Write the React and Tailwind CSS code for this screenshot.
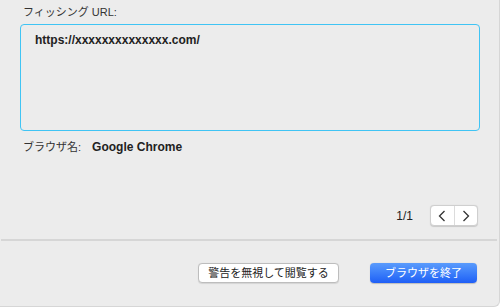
export default function App() {
  const font = { fontFamily: '"Liberation Sans", "Noto Sans CJK JP", sans-serif' };
  return (
    <div className="w-[500px] h-[307px] bg-[#ececec] flex flex-col overflow-hidden rounded-br-[6px] border-r border-b border-[#d6d6d6] text-[#262626]" style={font}>
      <div className="h-[24px] flex items-center pl-[23px] pt-[0px] text-[11px] text-[#333]">フィッシング URL:</div>
      <div className="ml-[20px] w-[460px] h-[107px] border border-[#40c4f4] rounded-[4px] pl-[14px] pt-[7px] text-[12px] font-semibold text-[#222] leading-[16px]">
        https://xxxxxxxxxxxxxx.com/
      </div>
      <div className="h-[32px] flex items-center pl-[23px] text-[11px]">
        <span className="text-[#333]">ブラウザ名:</span>
        <span className="ml-[11px] text-[12px] font-bold text-[#222]">Google Chrome</span>
      </div>
      <div className="h-[42px]" />
      <div className="h-[21px] flex items-center justify-end pr-[21px]">
        <span className="text-[12px] mr-[17px] text-[#222]">1/1</span>
        <div className="flex h-[21px] w-[48px] bg-white border border-[#cfcfcf] rounded-[4px] shadow-[0_0.5px_1px_rgba(0,0,0,0.15)]">
          <div className="flex-1 flex items-center justify-center border-r border-[#dcdcdc]">
            <svg width="8" height="12" viewBox="0 0 8 12"><path d="M6.5 1 L1.5 6 L6.5 11" fill="none" stroke="#333" strokeWidth="1.3" /></svg>
          </div>
          <div className="flex-1 flex items-center justify-center">
            <svg width="8" height="12" viewBox="0 0 8 12"><path d="M1.5 1 L6.5 6 L1.5 11" fill="none" stroke="#333" strokeWidth="1.3" /></svg>
          </div>
        </div>
      </div>
      <div className="h-[13px]" />
      <div className="h-[2px] bg-[#d6d6d6] ml-[1px] mr-[2px]" />
      <div className="h-[22px]" />
      <div className="flex items-center">
        <div className="ml-[198px] w-[141px] h-[20px] bg-white border border-[#bdbdbd] rounded-[4px] flex items-center justify-center text-[11px] text-[#222] shadow-[0_0.5px_1px_rgba(0,0,0,0.1)]">
          警告を無視して閲覧する
        </div>
        <div className="ml-[31px] w-[107px] h-[20px] rounded-[4px] flex items-center justify-center text-[11px] text-white bg-gradient-to-b from-[#5a9bfc] to-[#1f5ef6] shadow-[0_0.5px_1px_rgba(0,0,0,0.2)]">
          ブラウザを終了
        </div>
      </div>
    </div>
  );
}
